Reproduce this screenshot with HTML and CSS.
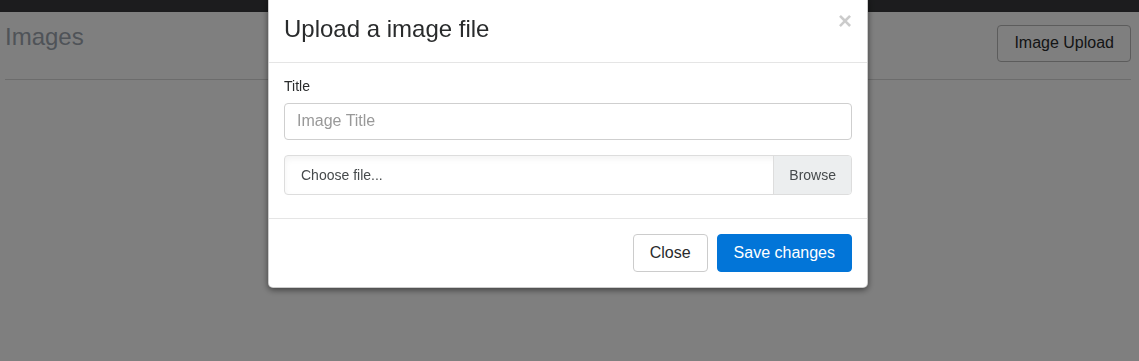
FILE: index.html
```html
<!DOCTYPE html>
<html lang="en">
<head>
  <meta charset="UTF-8">
  <meta name="viewport" content="width=device-width, initial-scale=1.0">
  <title>Images</title>
  <link rel="stylesheet" href="styles.css">
</head>
<body>
  <nav class="navbar"></nav>

  <div class="page">
    <div class="page-header">
      <h2 class="page-title">Images</h2>
      <button class="btn btn-outline">Image Upload</button>
    </div>
    <hr class="divider">
  </div>

  <!-- upload modal, open state -->
  <div class="modal-backdrop"></div>
  <div class="modal">
    <div class="modal-dialog">
      <div class="modal-header">
        <h4 class="modal-title">Upload a image file</h4>
        <button class="close" aria-label="Close">&times;</button>
      </div>

      <div class="modal-body">
        <div class="form-group">
          <label class="form-label" for="title">Title</label>
          <input class="form-control" id="title" type="text" placeholder="Image Title">
        </div>
        <label class="custom-file">
          <span class="custom-file-control">Choose file...</span>
          <span class="custom-file-browse">Browse</span>
        </label>
      </div>

      <div class="modal-footer">
        <button class="btn btn-secondary">Close</button>
        <button class="btn btn-primary">Save changes</button>
      </div>
    </div>
  </div>
</body>
</html>
```

FILE: styles.css
```css
* {
  box-sizing: border-box;
}

body {
  margin: 0;
  font-family: "Liberation Sans", Arial, sans-serif;
  font-size: 16px;
  color: #292b2c;
  background-color: #fff;
}

.navbar {
  height: 12px;
  background-color: #38393c;
}

.page {
  padding: 0 8px 0 5px;
}

.page-header {
  display: flex;
  justify-content: space-between;
  align-items: flex-start;
  margin-top: 9px;
}

.page-title {
  margin: 2px 0 0;
  font-size: 24px;
  font-weight: normal;
  line-height: 1.2;
  color: #9ea6b0;
}

.btn {
  font-family: inherit;
  font-size: 16px;
  line-height: 1.25;
  padding: 8px 16px;
  border-radius: 4px;
  border: 1px solid transparent;
  cursor: pointer;
}

.btn-outline {
  margin-top: 4px;
  height: 37px;
  padding-top: 7px;
  background: #fff;
  color: #292b2c;
  border-color: #b8b8b8;
}

.divider {
  margin: 17px 0 0;
  border: none;
  border-top: 1px solid #d8d8d8;
}

/* modal */

.modal-backdrop {
  position: fixed;
  inset: 0;
  background-color: rgba(0, 0, 0, 0.5);
}

.modal {
  position: fixed;
  inset: 0;
}

.modal-dialog {
  width: 600px;
  margin: -5px 0 0 268px;
  background-color: #fff;
  border: 1px solid rgba(0, 0, 0, 0.2);
  border-radius: 5px;
  box-shadow: 0 2px 6px rgba(0, 0, 0, 0.5);
}

.modal-header {
  display: flex;
  justify-content: space-between;
  align-items: flex-start;
  padding: 15px;
  border-bottom: 1px solid #e5e5e5;
}

.modal-title {
  margin: 0;
  font-size: 24px;
  font-weight: normal;
  line-height: 1.5;
  color: #292b2c;
}

.close {
  margin-top: -2px;
  padding: 0;
  background: none;
  border: none;
  font-family: inherit;
  font-size: 24px;
  font-weight: bold;
  line-height: 1;
  color: #000;
  opacity: 0.2;
}

.modal-body {
  padding: 15px 15px 7px;
}

.form-group {
  margin-bottom: 15px;
}

.form-label {
  display: block;
  font-size: 14px;
  line-height: 17.5px;
  margin-bottom: 7px;
}

.form-control {
  display: block;
  width: 100%;
  height: 37px;
  padding: 0 12px;
  font-family: inherit;
  font-size: 16px;
  color: #464a4c;
  border: 1px solid #cfcfcf;
  border-radius: 4px;
}

.form-control::placeholder {
  color: #999;
}

.custom-file {
  display: flex;
  height: 40px;
  margin-bottom: 16px;
  font-size: 14px;
  color: #464a4c;
  border: 1px solid #ddd;
  border-radius: 4px;
  overflow: hidden;
  box-shadow: inset 0 3px 6px rgba(0, 0, 0, 0.05);
}

.custom-file-control {
  flex: 1;
  display: flex;
  align-items: center;
  padding: 0 16px;
}

.custom-file-browse {
  display: flex;
  align-items: center;
  padding: 0 15px;
  background-color: #eceeef;
  border-left: 1px solid #ddd;
}

.modal-footer {
  display: flex;
  justify-content: flex-end;
  gap: 9px;
  padding: 15px;
  border-top: 1px solid #e5e5e5;
}

.btn-secondary {
  background-color: #fff;
  color: #292b2c;
  border-color: #ccc;
}

.btn-primary {
  background-color: #0275d8;
  color: #fff;
  border-color: #0275d8;
}
```
